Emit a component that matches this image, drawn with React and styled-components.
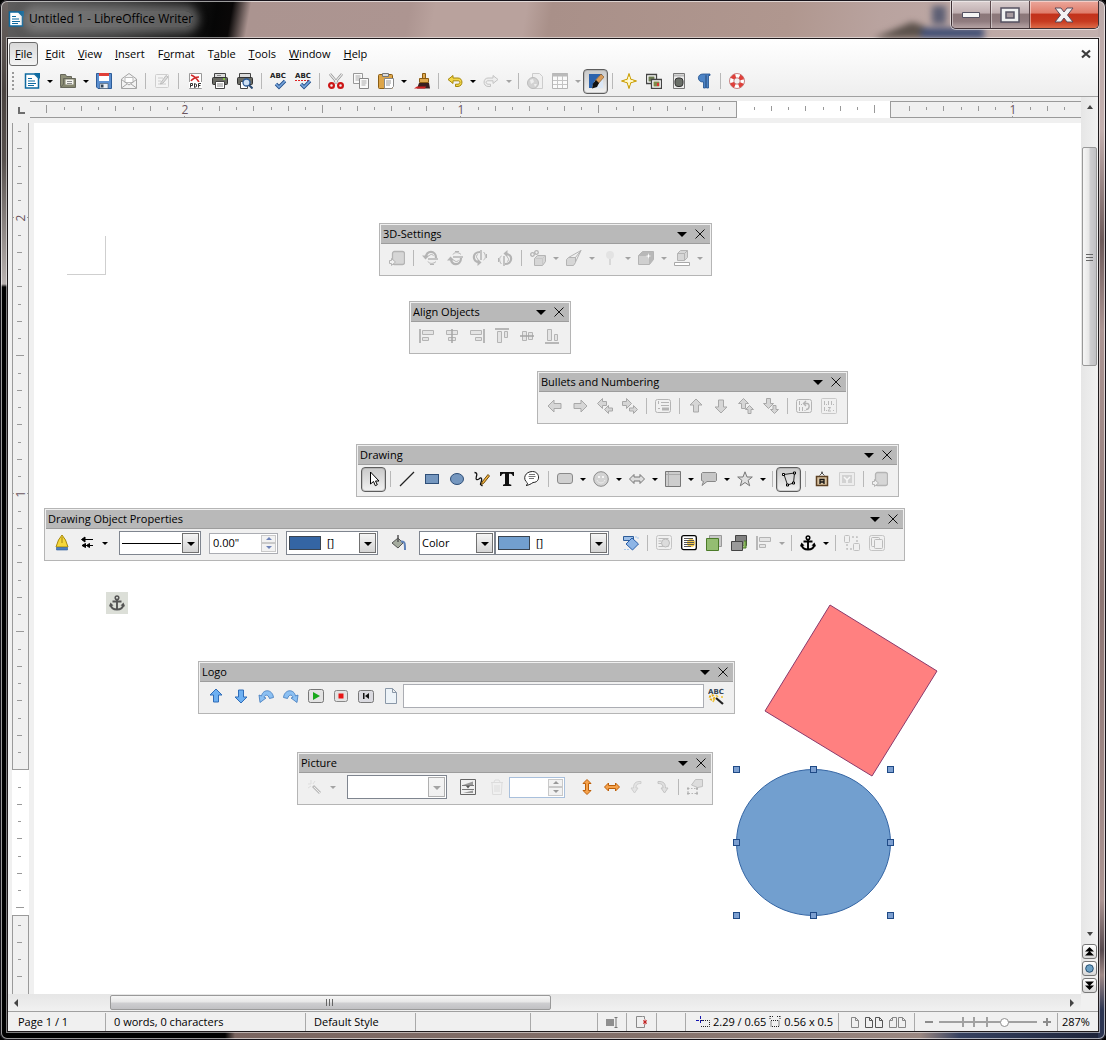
import React from "react";
import styled, { createGlobalStyle, css } from "styled-components";

const Global = createGlobalStyle`
  *, *::before, *::after { box-sizing: border-box; }
  body { margin: 0; background: #000; }
  body, button, input, select { font: 11px/16px "Open Sans", "Noto Sans", sans-serif; color: #000; }
  button { border: 0; background: none; padding: 0; }
`;

/* ---------- window frame ---------- */

const Frame = styled.div`
  display: flex;
  flex-direction: column;
  height: 100vh;
  min-height: 960px;
  padding: 0 7px 8px;
  border-radius: 7px;
  box-shadow: inset 0 0 0 1px #16131a, inset 0 0 0 2px rgba(255, 255, 255, 0.6);
  background:
    linear-gradient(to bottom, #6b6462 0, #4a4340 90px, #57504d 160px, #b9b2b0 284px, #000 287px) left / 8px 100% no-repeat,
    linear-gradient(to bottom, #bba9a8 0, #c4b0af 130px, #6d5a5a 240px, #ad9694 330px, #8d7674 600px, #ac9593 900px, #55484d 950px, #a08a88 975px, #2c3552 1010px) right / 8px 100% no-repeat,
    linear-gradient(to right, #000 0, #000 225px, #7a6560 235px, #83706a 640px, #9a8781 920px, #35405f 960px, #1c2238 100%) bottom / 100% 8px no-repeat,
    linear-gradient(100deg, #605f5f 0, #3a3a3a 120px, #060606 215px, #0a0808 230px, #ab9490 248px, #ad9591 405px, #b9a29d 430px, #b9a29d 520px, #a99089 545px, #b0978f 780px, #b9a39f 870px, #c3b0ae 100%) top / 100% 60px no-repeat,
    #000;
`;

const TitleBar = styled.header`
  position: relative;
  display: flex;
  align-items: center;
  flex: 0 0 38px;
  padding-left: 1px;
  gap: 5px;
  overflow: hidden;
`;

const Title = styled.h1`
  margin: 0;
  font-size: 12px;
  font-weight: 400;
  line-height: 16px;
  border-radius: 9px;
  background: rgba(150, 150, 150, 0.55);
  box-shadow: 0 0 9px 6px rgba(150, 150, 150, 0.55);
`;

const Scenery = styled.svg`
  position: absolute;
  right: 75px;
  bottom: 0;
  filter: blur(3px);
`;

const Captions = styled.div`
  position: relative;
  display: flex;
  align-self: flex-start;
  margin: 1px 0 0 auto;
  border: 1px solid #3d2f34;
  border-top: 0;
  border-radius: 0 0 5px 5px;
  box-shadow: 0 0 0 1px rgba(255, 255, 255, 0.55);
  overflow: hidden;
`;

const Caption = styled.button`
  display: grid;
  place-items: center;
  width: ${(p) => (p.$close ? 68 : 39)}px;
  height: 27px;
  border-right: 1px solid #5a484b;
  background: ${(p) =>
    p.$close
      ? "linear-gradient(#eba79b 0, #df7c6a 45%, #c2311a 48%, #c63a20 75%, #dd6a48)"
      : "linear-gradient(#dcd0d0 0, #bfaeb0 45%, #8b7779 48%, #8f7b7e 75%, #b5a3a4)"};
  box-shadow: inset 1px 1px 0 rgba(255, 255, 255, 0.45);
  &:last-child { border-right: 0; }
`;

const Client = styled.main`
  display: flex;
  flex-direction: column;
  flex: 1;
  min-height: 0;
  border: 1px solid #1f1a1c;
  box-shadow: 0 0 0 1px rgba(255, 255, 255, 0.5);
  background: #f0f0f0;
`;

/* ---------- menus and main toolbar ---------- */

const TopArea = styled.div`
  flex: 0 0 58px;
  border-bottom: 1px solid #a0a0a0;
  background: linear-gradient(#fff, #eee);
`;

const MenuBar = styled.nav`
  display: flex;
  align-items: center;
  height: 29px;
  padding: 0 7px 0 1px;
`;

const MenuItem = styled.button`
  height: 24px;
  padding: 0 5px;
  margin-right: 1px;
  border: 1px solid ${(p) => (p.$active ? "#6c6c6c" : "transparent")};
  border-radius: 3px;
  background: ${(p) => (p.$active ? "linear-gradient(#d9d9d9, #f4f4f4)" : "none")};
  u { text-underline-offset: 1px; }
`;

const CloseDoc = styled.button`
  display: flex;
  margin-left: auto;
`;

const Bar = styled.div`
  display: flex;
  align-items: center;
  height: 26px;
`;

const Grip = styled.span`
  width: 2px;
  height: 18px;
  margin: 0 5px 0 4px;
  background: repeating-linear-gradient(#999 0 2px, transparent 2px 4px);
`;

const Tool = styled.button`
  display: grid;
  place-items: center;
  flex: none;
  width: 25px;
  height: 25px;
  border-radius: 4px;
  ${(p) =>
    p.$on &&
    css`
      border: 1px solid #5d5d5d;
      background: linear-gradient(#c9c9c9, #f2f2f2);
      box-shadow: inset 0 0 0 1px rgba(140, 140, 140, 0.35);
    `}
`;

const Arrow = styled.button`
  flex: none;
  display: grid;
  place-items: center;
  width: 11px;
  height: 25px;
  &::before {
    content: "";
    border: 3px solid transparent;
    border-top-color: ${(p) => (p.$dim ? "#a3a3a3" : "#000")};
    border-bottom: 0;
  }
`;

const Sep = styled.span`
  flex: none;
  width: 8px;
  height: 16px;
  background: linear-gradient(#b8b8b8, #b8b8b8) center / 1px 100% no-repeat;
`;

const Gap = styled.span`
  flex: none;
  width: ${(p) => p.$w || 8}px;
  height: ${(p) => p.$h || 1}px;
`;

/* ---------- rulers, page and scroll bars ---------- */

const Work = styled.div`
  display: grid;
  grid-template-columns: minmax(0, 1fr) 17px;
  grid-template-rows: minmax(0, 1fr) 17px;
  flex: 1;
  min-height: 0;
`;

const Editor = styled.section`
  display: grid;
  grid-template-columns: 26px minmax(0, 1fr);
  grid-template-rows: 26px minmax(0, 1fr);
  min-height: 0;
`;

const Corner = styled.div`
  display: grid;
  place-items: center end;
  padding-right: 9px;
`;

const HRuler = styled.div`
  display: flex;
  margin-left: -4px;
  padding: 4px 0;
  overflow: hidden;
  svg { display: block; width: 100%; height: 17px; }
`;

const VRuler = styled.div`
  overflow: hidden;
  padding-left: 4px;
  svg { display: block; width: 17px; height: 100%; }
`;

const Page = styled.div`
  position: relative;
  overflow: hidden;
  background: #fff;
`;

const Shapes = styled.svg`
  position: absolute;
  inset: 0;
  width: 100%;
  height: 100%;
`;

const AnchorTag = styled.span`
  position: absolute;
  left: 72px;
  top: 469px;
  display: grid;
  place-items: center;
  width: 22px;
  height: 22px;
  color: #555;
  background: #dcdfd8;
`;

const VScroll = styled.div`
  display: flex;
  flex-direction: column;
  align-items: center;
  padding: 6px 0 1px;
  background: linear-gradient(to right, #e6e6e6, #f1f1f1);
`;

const HScroll = styled.div`
  display: flex;
  align-items: center;
  padding: 0 5px 0 4px;
  background: linear-gradient(#e6e6e6, #f1f1f1);
`;

const Track = styled.div`
  display: flex;
  flex: 1;
  min-width: 0;
  min-height: 0;
  ${(p) =>
    p.$vertical
      ? css`width: 15px; flex-direction: column; padding-top: 36px;`
      : css`height: 15px; padding-left: 90px;`}
`;

const Thumb = styled.button`
  display: grid;
  place-items: center;
  border: 1px solid #999;
  border-radius: 2px;
  ${(p) =>
    p.$vertical
      ? css`width: 15px; height: 28%; background: linear-gradient(to right, #f6f6f6 0, #e6e6e6 48%, #cfcfd1 52%, #c0c0c3);`
      : css`height: 15px; width: 46%; background: linear-gradient(#f6f6f6 0, #e6e6e6 48%, #cfcfd1 52%, #c0c0c3);`}
`;

const ScrollArrow = styled.button`
  display: grid;
  place-items: center;
  flex: none;
  width: 8px;
  height: 8px;
`;

const NavButton = styled.button`
  display: grid;
  place-items: center;
  flex: none;
  width: 15px;
  height: 15px;
  margin-top: 2px;
  border: 1px solid #777;
  border-radius: 3px;
  background: linear-gradient(#fff, #d8d8d8);
`;

const ScrollCorner = styled.div`
  background: #f0f0f0;
`;

/* ---------- floating toolbars ---------- */

const PanelBox = styled.section`
  position: absolute;
  left: ${(p) => p.$x}px;
  top: ${(p) => p.$y}px;
  width: ${(p) => p.$w}px;
  padding: 1px;
  border: 1px solid #b5b5b5;
  background: #f0f0f0;
`;

const PanelHead = styled.header`
  display: flex;
  align-items: center;
  gap: 8px;
  height: 19px;
  padding: 0 5px 0 2px;
  border-bottom: 1px solid #9d9d9d;
  background: #b9b9b9;
  h2 { flex: 1; margin: 0; font-size: 11px; font-weight: 400; line-height: 18px; white-space: nowrap; }
  button { display: flex; }
`;

const PanelBody = styled.div`
  display: flex;
  align-items: center;
  height: 30px;
  padding: 0 4px 2px 3px;
`;

const Combo = styled.label`
  position: relative;
  display: flex;
  align-items: center;
  flex: none;
  width: ${(p) => p.$w}px;
  height: 24px;
  border: 1px solid #7f858f;
  background: #fff;
  select {
    appearance: none;
    flex: 1;
    min-width: 0;
    height: 22px;
    padding: 0 20px 0 2px;
    border: 0;
    background: transparent;
  }
  &::before {
    content: "";
    position: absolute;
    right: 1px;
    top: 1px;
    width: 17px;
    height: 20px;
    border: 1px solid ${(p) => (p.$dim ? "#b0b0b0" : "#707070")};
    background: linear-gradient(#f4f4f4, ${(p) => (p.$dim ? "#f0f0f0" : "#d4d4d4")});
  }
  &::after {
    content: "";
    position: absolute;
    right: 5px;
    top: 10px;
    border: 4px solid transparent;
    border-top-color: ${(p) => (p.$dim ? "#a3a3a3" : "#000")};
    border-bottom: 0;
  }
`;

const Swatch = styled.span`
  flex: none;
  width: 32px;
  height: 14px;
  margin: 0 4px 0 2px;
  border: 1px solid #3a4450;
  background: ${(p) => p.$color};
`;

const LineSample = styled.span`
  position: absolute;
  left: 2px;
  right: 19px;
  height: 1px;
  background: #000;
`;

const Spin = styled.div`
  display: flex;
  flex: none;
  width: ${(p) => p.$w}px;
  height: 21px;
  padding: 1px;
  border: 1px solid ${(p) => (p.$blue ? "#a9c0dc" : "#abadb3")};
  background: #fff;
  input { flex: 1; min-width: 0; padding: 0 2px; border: 0; background: none; }
`;

const SpinButtons = styled.div`
  display: grid;
  grid-template-rows: 1fr 1fr;
  width: 15px;
  button {
    display: grid;
    place-items: center;
    border: 1px solid #c9c9c9;
    background: #f2f2f2;
  }
`;

const CommandLine = styled.input`
  flex: 1;
  min-width: 0;
  height: 24px;
  border: 1px solid #abadb3;
  background: #fff;
`;

/* ---------- status bar ---------- */

const StatusBar = styled.footer`
  display: flex;
  align-items: flex-end;
  flex: 0 0 20px;
  border-top: 1px solid #a0a0a0;
`;

const Cell = styled.div`
  display: flex;
  align-items: center;
  flex: ${(p) => (p.$grow ? "1 1 0" : "none")};
  width: ${(p) => p.$w}px;
  height: 18px;
  padding-left: ${(p) => p.$pad || 0}px;
  justify-content: ${(p) => (p.$center ? "center" : "flex-start")};
  gap: ${(p) => p.$gap || 0}px;
  white-space: nowrap;
  border-right: ${(p) => (p.$last ? 0 : 1)}px solid #a9a9a9;
  svg { flex: none; }
`;

const ZoomStep = styled.button`
  display: flex;
`;

const Zoom = styled.input`
  appearance: none;
  width: 98px;
  height: 16px;
  margin: 0;
  background:
    linear-gradient(#a0a0a0, #a0a0a0) 0 7px / 100% 2px no-repeat,
    linear-gradient(#a0a0a0, #a0a0a0) 23px 3px / 2px 10px no-repeat,
    linear-gradient(#a0a0a0, #a0a0a0) 34px 3px / 2px 10px no-repeat,
    linear-gradient(#a0a0a0, #a0a0a0) 47px 3px / 2px 10px no-repeat;
  &::-webkit-slider-thumb {
    appearance: none;
    width: 9px;
    height: 9px;
    border: 1px solid #909090;
    border-radius: 50%;
    background: #fff;
  }
`;

/* ---------- icons ---------- */

const Svg = ({ s = 16, w, h, children, ...rest }) => (
  <svg width={w || s} height={h || s} viewBox={`0 0 ${w || s} ${h || s}`} fill="none" aria-hidden="true" {...rest}>
    {children}
  </svg>
);

const G = "#b4b4b4";
const L = "#d6d6d6";

const blockArrow = "M1 8l6-6v3.500h7v5h-7V14z";
const small = "M0 4l4-4v2.500h4v3h-4V8z";

const Tri = ({ dir, c = "#444" }) => (
  <Svg s={8}>
    <path d={{ up: "M1 6l3-4 3 4z", down: "M1 2l3 4 3-4z", left: "M6 0v8L2 4z", right: "M2 0v8l4-4z" }[dir]} fill={c} />
  </Svg>
);

const Rotate3D = ({ t }) => (
  <g transform={t} stroke={G}>
    <path d="M4 7c0-7 10-7 10 1" strokeWidth="2.200" />
    <path d="M0 5.500h7.500L3.500 9.500z" fill={G} stroke="none" />
    <path d="M6 9h10" strokeWidth="1.500" />
    <path d="M7 6c1-2 4-2 4.500 0M6 11.500c1 2.500 6 2.500 8 0M8 14.500h4" />
  </g>
);

const Arc = ({ flip, a, b }) => (
  <g transform={flip ? "matrix(-1 0 0 1 16 0)" : undefined}>
    <path d="M1 7l1 7.500L8 10l-2-.8C7 6.500 10 6 11.500 10.500l4-1C14.500 1 5 .5 3.500 8z" fill={a} stroke={b} strokeWidth=".8" />
  </g>
);

const icons = {
  writer: <><path d="M1.500 1h9l4 4v10h-13z" fill="#fff" stroke="#0e6aa0" strokeWidth="1.500" /><path d="M10 0h6v6z" fill="#0e6aa0" /><path d="M4 5.500h4M4 8h7M4 10.500h8M4 12.500h6" stroke="#0e6aa0" /></>,
  open: <><path d="M.5 13.500v-12h5l1 2h5v10z" fill="#8f9078" stroke="#66675a" /><path d="M4.500 5.500h9v6h-9z" fill="#f5f5f0" stroke="#888" /><path d="M6 7.500h5M6 9.500h5" stroke="#888" /><path d="M.5 14.500l3-3.500V5.500h12v9z" fill="#85866f" stroke="#66675a" /><path d="M5.500 6.500h8v5h-8z" fill="#f5f5f0" /><path d="M7 8.500h5M7 10.500h5" stroke="#888" /></>,
  save: <><path d="M.5.500h15v15H2l-1.500-1.500z" fill="#5b8fd0" stroke="#2d5c98" /><path d="M3 1h10v7H3z" fill="#fff" /><path d="M3 0h10v3H3z" fill="#e0403a" /><path d="M4 10.500h8v5H4z" fill="#e8eef5" stroke="#456" strokeWidth=".6" /><path d="M5 11.500h2.500v3H5z" fill="#345" /></>,
  mail: <><path d="M.5 6l7.500-5.500L15.500 6v9.500H.500z" fill="#f3f3f3" stroke="#a5a5a5" /><path d="M4 4.500h8v5H4z" fill="#fff" stroke="#bbb" /><path d="M.5 6.500L8 12l7.500-5.500M.5 15L6 11M15.500 15L10 11" stroke="#a5a5a5" /></>,
  edit: <><rect x="1.500" y="1.500" width="13" height="13" rx="1" fill="#f4f4f4" stroke="#cfcfcf" /><path d="M4 5h5M4 8h3M4 11h8" stroke="#ccc" /><path d="M7 9.500L12 2.500l2 1.500-5 6-2.500 1z" fill="#ddd" stroke="#bbb" /></>,
  pdf: <><path d="M2.500.500h12v15h-12z" fill="#fff" stroke="#999" /><path d="M4 2c3 1 6 4 8 7M12 4C9 4 5 6 4 8" stroke="#cf2b2b" strokeWidth="1.600" /><path d="M2 9h13v6H2z" fill="#fff" /><path d="M3.500 14.500v-4h2v2h-2M7.500 14.500v-4l2 1v2l-2 1M11.500 14.500v-4h2.500M11.500 12.500h2" stroke="#333" /></>,
  print: <><path d="M2.500.500h11v5h-11z" fill="#ddd" stroke="#444" /><rect x=".5" y="4.500" width="15" height="7" rx="1" fill="#6a6b64" stroke="#333" /><path d="M3.500 8.500h9v7h-9z" fill="#fff" stroke="#444" /><path d="M5 2.500h4M5 11h6M5 13h6" stroke="#888" /><path d="M11 6h2" stroke="#8be03b" strokeWidth="1.500" /></>,
  preview: <><path d="M2.500.500h11v5h-11z" fill="#ddd" stroke="#444" /><rect x=".5" y="4.500" width="15" height="7" rx="1" fill="#6a6b64" stroke="#333" /><path d="M3.500 8.500h7v7h-7z" fill="#fff" stroke="#444" /><circle cx="9.500" cy="9.500" r="3.500" fill="#cfe1f5" stroke="#2d5c98" strokeWidth="1.300" /><path d="M12 12l3.500 3.500" stroke="#2b4a72" strokeWidth="2" /></>,
  cut: <><path d="M2 1l7.500 9M14 1L6.500 10" stroke="#888" strokeWidth="2.600" /><path d="M2 1l7.500 9M14 1L6.500 10" stroke="#e8e8e8" strokeWidth="1.200" /><circle cx="3.500" cy="12.500" r="2.400" stroke="#cc1515" strokeWidth="2.200" /><circle cx="12.500" cy="12.500" r="2.400" stroke="#cc1515" strokeWidth="2.200" /></>,
  copy: <><path d="M.5.500h9v10h-9z" fill="#fafafa" stroke="#999" /><path d="M2.500 3h5M2.500 5h5M2.500 7h4" stroke="#aaa" /><path d="M6.500 5.500h9v10h-9z" fill="#fafafa" stroke="#888" /><path d="M8.500 8h5M8.500 10h5M8.500 12h4" stroke="#aaa" /></>,
  paste: <><rect x=".5" y="1.500" width="14" height="14" rx="1" fill="#dda548" stroke="#8a5d14" /><path d="M4.500.500h6v3h-6z" fill="#ddd" stroke="#777" /><path d="M6.500 5.500h9v8l-2 2h-7z" fill="#fff" stroke="#888" /><path d="M8 8h5M8 10h5M8 12h4" stroke="#999" /></>,
  brush: <><path d="M8.500.500h3v5h-3zM5.500 5.500h9v4h-9z" fill="#e0a94f" stroke="#8a5d14" /><path d="M5 10h10l1 5.500H3z" fill="#3a2020" /><path d="M0 15.500l3-2h9l-1 2z" fill="#d02020" /></>,
  undo: <><path d="M1 6.500l5-4v2.500h5c5 0 5.500 8 0 8.500H8.500v-2.300H11c2.500-.4 2.500-3.400 0-3.400H6v2.700z" fill="#f2d648" stroke="#a5860a" /></>,
  redo: <><g transform="matrix(-1 0 0 1 16 0)"><path d="M1 6.500l5-4v2.500h5c5 0 5.500 8 0 8.500H8.500v-2.300H11c2.500-.4 2.500-3.400 0-3.400H6v2.700z" fill="#ededed" stroke="#c4c4c4" /></g></>,
  web: <><path d="M5.500.500h7l3 3v12h-10z" fill="#f0f0f0" stroke="#ccc" /><circle cx="6" cy="10" r="5.500" fill="#d2d2d2" stroke="#bbb" /><path d="M3 7l3-1 1 3-3 2zM7 11l3 0-2 3z" fill="#eee" /></>,
  table: <><path d="M.5.500h15v15H.500z" fill="#fbfbfb" stroke="#b5b5b5" /><path d="M0 2h16" stroke="#bbb" strokeWidth="3" /><path d="M1 7.500h14M1 11.500h14M5.500 3v12M10.500 3v12" stroke="#c4c4c4" /></>,
  draw: <><path d="M1 1h14v14H1z" fill="#2c63ad" /><path d="M15 1v14H4C5 9 9 4 15 1z" fill="#dbe7f6" /><path d="M13 1l3 3-6 7-3-3z" fill="#d89c5a" stroke="#7a4e1c" strokeWidth=".6" /><path d="M8 7l3 3-2 4-5 1.500 1-5z" fill="#111" /></>,
  navigator: <><path d="M8 .5L9.800 6.200 15.500 8 9.800 9.800 8 15.500 6.200 9.800.500 8l5.700-1.800z" fill="#ffef8a" stroke="#c79a00" /><path d="M8 4v8M4 8h8" stroke="#fff" /></>,
  gallery: <><path d="M.5 1.500h10v9H.500z" fill="#fff" stroke="#444" strokeWidth="1.300" /><path d="M2.500 3.500h6v5h-6z" fill="#6a7a50" /><path d="M5.500 6.500h10v9h-10z" fill="#fff" stroke="#444" strokeWidth="1.300" /><path d="M7.500 8.500h6v5h-6z" fill="#7f8a4a" /><path d="M11 10h2v3h-2z" fill="#d33" /></>,
  data: <><path d="M2.500.500h11v15h-11z" fill="#eee" stroke="#777" /><path d="M3 2.500h10" stroke="#bbb" strokeWidth="2" /><rect x="4" y="5" width="8" height="8.500" rx="3" fill="#6a6f68" stroke="#333" /></>,
  pilcrow: <path d="M14 1v1.500h-1.500V15h-2V2.500H9.500V15h-2V9C1 9.500.500 1 7 1z" fill="#4d84c6" stroke="#1e4f8d" strokeWidth=".8" />,
  help: <><circle cx="8" cy="8" r="5.300" stroke="#fff" strokeWidth="4" /><circle cx="8" cy="8" r="5.300" stroke="#e0403a" strokeWidth="4" strokeDasharray="4.200 4.120" strokeDashoffset="-2" /><circle cx="8" cy="8" r="7.500" stroke="#a33" strokeWidth=".6" /><circle cx="8" cy="8" r="3.200" stroke="#a33" strokeWidth=".6" /></>,

  extrude: <><rect x="3.500" y="1.500" width="12" height="13" rx="2" fill={L} stroke={G} strokeWidth="1.300" /><path d="M.5 13.500v-3h2v-2l4 3.500-4 3.500v-2z" fill="#f0f0f0" stroke={G} /></>,
  tilt1: <Rotate3D />,
  tilt2: <Rotate3D t="matrix(1 0 0 -1 0 16)" />,
  tilt3: <Rotate3D t="matrix(0 -1 1 0 0 16)" />,
  tilt4: <Rotate3D t="matrix(0 1 -1 0 16 0)" />,
  depth: <><path d="M4.500 8.500l3-3h8v6l-3 4h-8z" fill={L} stroke={G} /><path d="M12.500 15V8.500h-7M12.500 8.500l3-3" stroke="#c8c8c8" /><circle cx="2.500" cy="4.500" r="1.800" stroke={G} strokeWidth="1.300" /><circle cx="6.500" cy="2.500" r="1.800" stroke={G} strokeWidth="1.300" /></>,
  direction: <><path d="M.5 9.500l2-2h7v5l-2 3h-7z" fill={L} stroke={G} /><path d="M2.500 7.500L15 .5 9.500 12M9 8l6-7.500" stroke={G} /></>,
  light: <><circle cx="8" cy="5" r="4" fill="#e3e3e3" /><path d="M8 9v6" stroke="#d8d8d8" strokeWidth="2" /></>,
  surface: <><path d="M.5 5.500l4-4h11v8l-4 5h-11z" fill="#b8b8b8" stroke={G} /><path d="M1 6h10v8H1z" fill="#cfcfcf" /><path d="M10.500 3l.6 2.400 2.400.6-2.400.6-.6 2.400-.6-2.400L7.500 6l2.400-.6z" fill="#fff" /></>,
  color3d: <><path d="M3.500 3.500l3-3h7v7l-3 3h-7z" fill={L} stroke={G} /><path d="M10.500 10.500v-7h-7M10.500 3.500l3-3" stroke={G} /><path d="M.5 12.500h15v3H.500z" fill="#fff" stroke="#a8a8a8" /></>,

  alignL: <><path d="M1 1v14" stroke="#a4a4a4" strokeWidth="1.500" /><path d="M3.500 2.500h11v4h-11zM3.500 9.500h6v3h-6z" fill="#e4e4e4" stroke={G} /></>,
  alignC: <><path d="M2.500 2.500h11v4h-11zM4.500 9.500h7v3h-7z" fill="#e4e4e4" stroke={G} /><path d="M8 1v14" stroke="#a4a4a4" strokeWidth="1.500" /></>,
  alignR: <><path d="M15 1v14" stroke="#a4a4a4" strokeWidth="1.500" /><path d="M1.500 2.500h11v4h-11zM6.500 9.500h6v3h-6z" fill="#e4e4e4" stroke={G} /></>,
  alignT: <><path d="M1 1h14" stroke="#a4a4a4" strokeWidth="1.500" /><path d="M3.500 3.500h4v11h-4zM10.500 3.500h3v6h-3z" fill="#e4e4e4" stroke={G} /></>,
  alignM: <><path d="M3.500 3.500h4v9h-4zM9.500 4.500h4v7h-4z" fill="#e4e4e4" stroke={G} /><path d="M1 8h14" stroke="#a4a4a4" strokeWidth="1.500" /></>,
  alignB: <><path d="M1 15h14" stroke="#a4a4a4" strokeWidth="1.500" /><path d="M3.500 1.500h4v11h-4zM10.500 6.500h3v6h-3z" fill="#e4e4e4" stroke={G} /></>,

  left: <path d={blockArrow} fill={L} stroke="#a8a8a8" />,
  right: <g transform="matrix(-1 0 0 1 16 0)"><path d={blockArrow} fill={L} stroke="#a8a8a8" /></g>,
  left2: <g fill={L} stroke="#a8a8a8"><path d="M.5 5.500l5-5v3h4v4h-4v3z" /><path transform="translate(7.500 7.500)" d={small} /></g>,
  right2: <g fill={L} stroke="#a8a8a8"><path d="M9.500 5.500l-5-5v3h-4v4h4v3z" /><path transform="matrix(-1 0 0 1 15.500 7.500)" d={small} /></g>,
  up: <g transform="matrix(0 1 1 0 0 0)"><path d={blockArrow} fill={L} stroke="#a8a8a8" /></g>,
  down: <g transform="matrix(0 -1 1 0 0 16)"><path d={blockArrow} fill={L} stroke="#a8a8a8" /></g>,
  up2: <g fill={L} stroke="#a8a8a8"><path d="M5.500.500l5 5h-3v5h-4v-5h-3z" /><path transform="matrix(0 1 1 0 7.500 7.500)" d={small} /></g>,
  down2: <g fill={L} stroke="#a8a8a8"><path d="M5.500 10.500l5-5h-3v-5h-4v5h-3z" /><path transform="matrix(0 -1 1 0 7.500 15.500)" d={small} /></g>,
  unnumbered: <><rect x=".5" y="1.500" width="15" height="13" rx="2" stroke={G} /><path d="M3.500 3v3M6 4.500h8M6 7.500h8" stroke={G} /><path d="M7 11h7" stroke={G} strokeWidth="3" /><path d="M3 10.500h2" stroke={G} /></>,
  restart: <><rect x=".5" y="1.500" width="15" height="13" rx="2" stroke={G} /><path d="M3.500 3v4M3.500 9v4M6.500 9v4M5 6.500h1M8.500 12.500h1" stroke={G} /><path d="M8 5.500h3c3 0 3 6-1 6M10 3L7.500 5.500 10 8" stroke={G} strokeWidth="1.400" /></>,
  bullets: <><rect x=".5" y=".5" width="15" height="15" rx="1" stroke="#c9c9c9" /><path d="M3.500 3v4M7.500 3v4M10.500 3v4M5 6.500h1M12 6.500h1M3.500 9v4M7 9.500h2.500l-2.500 3.500h3M5 12.500h1M12 12.500h1" stroke="#b9b9b9" /></>,

  select: <path d="M4.500 1v12l3-2.500 1.800 4.200 2-1L9.500 10H13z" fill="#fff" stroke="#000" />,
  line: <path d="M1 15L15 1" stroke="#222" strokeWidth="1.200" />,
  rect: <rect x="1.500" y="3.500" width="13" height="9" fill="#7597bf" stroke="#2f4f78" />,
  ellipse: <ellipse cx="8" cy="8" rx="6.500" ry="5.500" fill="#7597bf" stroke="#2f4f78" />,
  curve: <><path d="M.5 1.500c5 0 0 6 2 7s4-3 5-1-1 4-1 6l2 1.500" stroke="#111" strokeWidth="1.300" /><path d="M14 3.500l1.500 1.500-6 7.500-2 1 .5-2.500z" fill="#f3b33d" stroke="#6b4a10" /></>,
  text: <path d="M1 1h14v4h-1.200c-.3-1.800-1-2.300-3.800-2.300V13l2.300.8V15H4v-1.200L6 13V2.700C3.200 2.700 2.500 3.200 2.200 5H1z" fill="#111" />,
  callout: <><path d="M2 14.500c1.500-1 1.500-1.500 1.500-2.500C-2 8 1 .5 8.500.500S17 11.500 9 11.500c-2 1.500-4 2.500-7 3z" fill="#fff" stroke="#222" /><path d="M5 3.500h6M4.500 5.500h7M5 7.500h5" stroke="#777" /></>,
  basic: <rect x=".5" y="2.500" width="15" height="10" rx="2.500" fill="#d0d0d0" stroke="#8a8a8a" />,
  smiley: <><circle cx="8" cy="8" r="7.300" fill="#d3d3d3" stroke="#8a8a8a" /><path d="M6 5v2M10 5v2" stroke="#fff" strokeWidth="1.500" /><path d="M4 9c1.500 4 6.500 4 8 0" stroke="#eee" /></>,
  doubleArrow: <path d="M.5 8L5 3.500V6h6V3.500L15.500 8 11 12.500V10H5v2.500z" fill="#ddd" stroke="#777" />,
  flowchart: <><path d="M.5.500h15v15H.500z" fill="#cdcdcd" stroke="#777" /><path d="M1 3.500h14M3.500 1v14" stroke="#aaa" /></>,
  bubble: <path d="M1.500 1.500h13l1 1v7l-1 1H6l-5 4 1.500-4-2-1v-7z" fill="#c6c6c6" stroke="#888" />,
  star: <path d="M8 .8l2 5.200h5.300l-4.200 3.300 1.600 5.500L8 11.500l-4.700 3.300 1.600-5.500L.7 6H6z" fill="#e0e0e0" stroke="#777" />,
  points: <><path d="M3 3.500L13.500 2l-1 10-6 2z" stroke="#222" /><path d="M1.500 2.500h2v2h-2zM12.500 1h2v2h-2zM11.500 11h2v2h-2zM5.500 13h2v2h-2z" fill="#fff" stroke="#000" /></>,
  fontwork: <><path d="M5.500 4.500L8 2l2.500 2.500" stroke="#555" /><circle cx="8" cy="1.500" r="1" fill="#555" /><path d="M2.500 5.500h11v9h-11z" fill="#d9c3a2" stroke="#5c4023" strokeWidth="1.500" /><path d="M6 13V8.500h4V13M6 11h4" stroke="#111" strokeWidth="1.300" /></>,
  picture: <><path d="M.5 1.500h15v13H.500z" fill="#ededed" stroke="#cfcfcf" /><path d="M3 4h10v8H3z" fill="#d2d2d2" /><path d="M5 6l3 3 3-3M8 9v3" stroke="#f8f8f8" strokeWidth="1.500" /></>,

  pen: <><path d="M8 0l3.500 5 2.500 7H2l2.500-7z" fill="#f5d73c" stroke="#a5860a" /><path d="M8 2v6" stroke="#a5860a" /><path d="M2.500 12.500h11v2.500h-11z" fill="#4d7fc0" stroke="#2d5c98" strokeWidth=".6" /></>,
  arrows: <path d="M3 4.500h11M3 10.500h11M6 2L2.500 4.500 6 7zM6.500 8.500L3 10.500 6.500 12.500zM10.500 8.500l-3 2 3 2z" stroke="#000" fill="#000" />,
  bucket: <><path d="M1 8l6-5 5 5-5 5z" fill="#a5ac9f" stroke="#555" /><path d="M7 0v7" stroke="#555" strokeWidth="1.500" /><path d="M10 6.500c4-.5 4 2 4 8.500" stroke="#5f82b8" strokeWidth="2" /></>,
  rotate: <><path d="M.5 1.500h10v4h-10z" fill="#9dbfe8" stroke="#2d5c98" /><path d="M9 3l6.500 6-6 6L3 9z" fill="#8db5e6" stroke="#2a5ea8" /><path d="M1 14.500h5M12 2h3v3" stroke="#a9c8ec" strokeDasharray="2 1" /></>,
  wrapOff: <><rect x=".5" y=".5" width="15" height="14" rx="2" stroke="#c4c4c4" /><path d="M2.500 3.500h10M2.500 6h3M2.500 8.500h3M2.500 11.500h10" stroke="#bbb" /><circle cx="9.500" cy="8" r="4" fill="#dcdcdc" stroke="#bbb" /></>,
  wrapOn: <><rect x=".7" y=".7" width="14.600" height="14" rx="2" fill="#fff" stroke="#000" strokeWidth="1.300" /><circle cx="10" cy="8" r="4" fill="#f2c84b" /><path d="M3 3.500h9M3 5.500h10M3 7.500h10M3 9.500h10M3 11.500h7" stroke="#555" /></>,
  front: <><path d="M3.500.500h12v11h-12z" fill="#c9c9c9" stroke="#999" /><path d="M.5 3.500h12v12H.500z" fill="#94bd72" stroke="#4b7a28" /></>,
  back: <><path d="M4.500.500h11v10h-11z" fill="#808080" stroke="#444" /><path d="M13 6h2v7h-3" fill="#8cb85f" stroke="#4b7a28" /><path d="M.5 6.500h11v9H.500z" fill="#9a9a9a" stroke="#444" /></>,
  anchor: <><circle cx="8" cy="2.800" r="1.800" stroke="currentColor" strokeWidth="1.500" /><path d="M8 4.500V15M3.500 6.500h9M1.500 9.500C2 13 5 14.500 8 14.500S14 13 14.500 9.500" stroke="currentColor" strokeWidth="1.900" /><path d="M0 11.500l1.500-4 3 3zM16 11.500l-1.500-4-3 3z" fill="currentColor" /></>,
  ungroup: <><rect x="9.500" y="8.500" width="6" height="7" rx="1" stroke="#c0c0c0" /><rect x=".5" y=".5" width="5" height="7" rx="1" stroke="#c0c0c0" /><path d="M8 2h5v5M3 9v5h5" stroke="#c0c0c0" strokeWidth="1.500" strokeDasharray="2 2" /></>,
  group: <><rect x=".5" y=".5" width="15" height="15" rx="2" stroke="#c4c4c4" /><rect x="2.500" y="2.500" width="8" height="9" rx="1" stroke="#bbb" /><rect x="5.500" y="4.500" width="8" height="9" rx="1" fill="#f0f0f0" stroke="#bbb" /></>,

  logoUp: <g transform="matrix(0 1 1 0 0 0)"><path d={blockArrow} fill="#6db0f2" stroke="#2f6cb8" /></g>,
  logoDown: <g transform="matrix(0 -1 1 0 0 16)"><path d={blockArrow} fill="#6db0f2" stroke="#2f6cb8" /></g>,
  logoLeft: <Arc a="#8cc0f2" b="#3f79bd" />,
  logoRight: <Arc flip a="#8cc0f2" b="#3f79bd" />,
  play: <><rect x=".5" y="1.500" width="15" height="13" rx="2" fill="#e3e3e3" stroke="#777" /><path d="M5 4v8l7-4z" fill="#17a81a" /></>,
  stop: <><rect x="1.500" y="2.500" width="13" height="11" rx="2" fill="#e3e3e3" stroke="#888" /><path d="M5.500 5.500h5v5h-5z" fill="#e81515" /></>,
  home: <><rect x=".5" y="2.500" width="15" height="12" rx="2" fill="#dadae0" stroke="#777" /><path d="M5 5h1.500v6H5zM11 5v6L7 8z" fill="#111" /></>,
  page: <path d="M2.500.500h7l4 4v11h-11zM9.500.500v4h4" fill="#edf3f8" stroke="#8a98a8" />,
  wand: <><path d="M8 10l7 6" stroke="#222" strokeWidth="2.200" /><circle cx="4" cy="9.500" r="2.200" stroke="#e6ad18" strokeWidth="2" strokeDasharray="2 1" /><path d="M8 7l2 2M14 8v2M7 10l-2 4" stroke="#f0c53a" strokeWidth="1.600" /></>,

  filter: <><path d="M6 7l7 7" stroke="#bbb" strokeWidth="3" /><path d="M7 8l6 6" stroke="#eee" /><path d="M4 1v4M1 5h3M8 2L6 5M1 9l3-2" stroke="#ddd" /></>,
  contrast: <><path d="M.5.500h15v15H.500z" fill="#f0f0f0" stroke="#666" /><path d="M3 6l10-3.500V6z" fill="#999" /><path d="M3 14l10-2.500V14z" fill="#999" /><path d="M2 6.500h12M2 10.500h12" stroke="#777" /><path d="M6 7h4l-2 2.500z" fill="#555" /></>,
  trash: <path d="M2 3.500h12M3 4l.7 11.500h8.600L13 4M5 3l1-2h4l1 2M6 6v7M8 6v7M10 6v7" stroke="#dcdcdc" />,
  flipV: <g transform="matrix(0 1 1 0 0 0)"><path d="M.5 8l4-4v2.500h7V4l4 4-4 4V9.500h-7V12z" fill="#f5a24c" stroke="#bd5f08" /></g>,
  flipH: <path d="M.5 8l4-4v2.500h7V4l4 4-4 4V9.500h-7V12z" fill="#f5a24c" stroke="#bd5f08" />,
  turnL: <path d="M12 2.500C6 2 4.500 5 4.500 9H2l3.500 5 3.500-5H7c0-3 1-4.500 5-4.500z" fill="#e4e4e4" stroke="#cfcfcf" />,
  turnR: <path d="M4 2.500c6-.5 7.500 2.500 7.500 6.500H14l-3.500 5L7 9h2c0-3-1-4.500-5-4.500z" fill="#e0e0e0" stroke="#c4c4c4" />,
  props: <><path d="M4.500 6l4-5.500h7v7l-5 1z" fill="#ddd" stroke="#c0c0c0" /><path d="M1 9.500h9v5H1z" stroke="#b5b5b5" strokeDasharray="1.500 1.500" /><path d="M0 8.500h2v2H0zM9 8.500h2v2H9zM0 13.500h2v2H0zM9 13.500h2v2H9z" fill="#b0b0b0" /></>,
};

const AbcText = styled.text`
  font: 700 7px "DejaVu Sans", sans-serif;
`;

const Abc = ({ wavy }) => (
  <Svg s={18}>
    <AbcText x="1" y="6" fill="#222">ABC</AbcText>
    {wavy && <path d="M1 8.500h14" stroke="#d22" strokeDasharray="2 1" />}
    <path d="M7 12l3 3 6-6" stroke="#24508c" strokeWidth="3.400" />
    <path d="M7 12l3 3 6-6" stroke="#79a7de" strokeWidth="1.600" />
  </Svg>
);

const Icon = ({ n, s }) => {
  if (n === "spell") return <Abc />;
  if (n === "autospell") return <Abc wavy />;
  if (n === "command")
    return (
      <Svg s={17}>
        {icons.wand}
        <AbcText x="0" y="6" fill="#345">ABC</AbcText>
      </Svg>
    );
  return (
    <svg width={s || 16} height={s || 16} viewBox="0 0 16 16" fill="none" aria-hidden="true">
      {icons[n]}
    </svg>
  );
};

/* "|" is a separator, a "+" suffix adds a menu arrow, "-" a greyed one, "*" marks a pressed tool */
const Tools = ({ items }) =>
  items.split(" ").map((it, i) => {
    if (it === "|") return <Sep key={i} />;
    const name = it.replace(/[+\-*]/g, "");
    return (
      <React.Fragment key={i}>
        <Tool aria-label={name} $on={it.includes("*")}>
          <Icon n={name} />
        </Tool>
        {/[+-]/.test(it) && <Arrow aria-label={`${name} options`} $dim={it.includes("-")} />}
      </React.Fragment>
    );
  });

const Panel = ({ title, x, y, w, children }) => (
  <PanelBox $x={x} $y={y} $w={w} aria-label={title}>
    <PanelHead>
      <h2>{title}</h2>
      <button aria-label="Toolbar options">
        <Svg w={10} h={5}><path d="M0 0h10L5 5z" fill="#000" /></Svg>
      </button>
      <button aria-label="Close toolbar">
        <Svg s={10}><path d="M.5.500l9 9M9.500.500l-9 9" stroke="#111" /></Svg>
      </button>
    </PanelHead>
    <PanelBody>{children}</PanelBody>
  </PanelBox>
);

const SpinBox = ({ w, blue, value, label }) => (
  <Spin $w={w} $blue={blue}>
    <input aria-label={label} defaultValue={value} />
    <SpinButtons>
      <button aria-label={`Increase ${label}`}><Svg w={6} h={3}><path d="M0 3l3-3 3 3z" fill={blue ? "#999" : "#6f83b8"} /></Svg></button>
      <button aria-label={`Decrease ${label}`}><Svg w={6} h={3}><path d="M0 0l3 3 3-3z" fill={blue ? "#999" : "#6f83b8"} /></Svg></button>
    </SpinButtons>
  </Spin>
);

/* ---------- ruler drawing ---------- */

const STEP = 276 / 16;
const range = (a, b) => Array.from({ length: b - a + 1 }, (_, i) => a + i);
const tickLength = (i) => (i % 8 === 0 ? 8 : i % 2 === 0 ? 5 : 3);

const RulerText = styled.text`
  font: 12px "Open Sans", "Noto Sans", sans-serif;
  fill: #6b5560;
  text-anchor: middle;
`;

const HorizontalRuler = () => {
  const zero = 706;
  return (
    <svg aria-hidden="true" shapeRendering="crispEdges">
      <path d={`M0 .5H${zero}.5V16.500H0`} fill="none" stroke="#9a9a9a" />
      <rect x={zero + 1} width="153" height="17" fill="#fff" />
      <path d={`M3000 .5H${zero + 154}.5V16.500H3000`} fill="none" stroke="#9a9a9a" />
      {range(-40, 19).map((i) => {
        const x = Math.ceil(zero + i * STEP);
        if (i === 0 || i === 9) return null;
        if (i % 16 === 0)
          return (
            <g key={i}>
              <rect x={x} y="1" width="1" height="1" fill="#999" />
              <rect x={x} y="15" width="1" height="1" fill="#999" />
              <RulerText x={x + 1} y="13">{Math.abs(i / 16)}</RulerText>
            </g>
          );
        const l = tickLength(i);
        return <rect key={i} x={x} y={Math.floor(8 - l / 2)} width="1" height={l} fill="#999" />;
      })}
    </svg>
  );
};

const VerticalRuler = () => {
  const zero = 646;
  return (
    <svg aria-hidden="true" shapeRendering="crispEdges">
      <path d={`M.5 0V${zero}.5H16.500V0`} fill="none" stroke="#9a9a9a" />
      <rect y={zero + 1} width="17" height="146" fill="#fff" />
      <path d={`M.5 3000V${zero + 146}.5H16.500V3000`} fill="none" stroke="#9a9a9a" />
      {range(-37, 12).map((i) => {
        const y = Math.ceil(zero + i * STEP);
        if (i === 0) return null;
        if (i % 16 === 0)
          return (
            <g key={i}>
              <rect x="1" y={y} width="1" height="1" fill="#999" />
              <rect x="15" y={y} width="1" height="1" fill="#999" />
              <RulerText transform={`translate(13 ${y + 1}) rotate(-90)`}>{Math.abs(i / 16)}</RulerText>
            </g>
          );
        const l = tickLength(i);
        return <rect key={i} y={y} x={Math.floor(8 - l / 2)} height="1" width={l} fill="#999" />;
      })}
    </svg>
  );
};

const Handle = ({ x, y }) => (
  <rect x={x - 2.5} y={y - 2.5} width="6" height="6" fill="#7c9fd0" stroke="#1f4a86" />
);

const menus = [["", "F", "ile"], ["", "E", "dit"], ["", "V", "iew"], ["", "I", "nsert"], ["F", "o", "rmat"], ["T", "a", "ble"], ["", "T", "ools"], ["", "W", "indow"], ["", "H", "elp"]];

export default function App() {
  return (
    <>
      <Global />
      <Frame>
        <TitleBar>
          <Scenery width="170" height="38" aria-hidden="true">
            <path d="M20 38l38-16 12 4 8 12z" fill="#5c524c" />
            <path d="M68 28h62v10H66z" fill="#3f4d74" />
            <path d="M78 6h14v18h-14z" fill="#5d5f74" />
          </Scenery>
          <Icon n="writer" />
          <Title>Untitled 1 - LibreOffice Writer</Title>
          <Captions>
            <Caption aria-label="Minimize">
              <Svg w={18} h={6}><path d="M.5.500h17v5H.500z" fill="#f5f5f5" stroke="#555262" /></Svg>
            </Caption>
            <Caption aria-label="Maximize">
              <Svg w={20} h={16}><path d="M1 1h18v14H1z" fill="#f0f0f0" stroke="#555262" strokeWidth="1.500" /><path d="M6 5h8v6H6z" fill="#a79a9f" stroke="#555262" strokeWidth="1.500" /></Svg>
            </Caption>
            <Caption $close aria-label="Close">
              <Svg w={20} h={16}><path d="M1 1h6l3 4 3-4h6l-5.500 7 5.500 7h-6l-3-4-3 4H1l5.500-7z" fill="#f2f2f2" stroke="#5a4a5a" /></Svg>
            </Caption>
          </Captions>
        </TitleBar>

        <Client>
          <TopArea>
            <MenuBar aria-label="Menu">
              {menus.map(([a, b, c], i) => (
                <MenuItem key={i} $active={i === 0}>{a}<u>{b}</u>{c}</MenuItem>
              ))}
              <CloseDoc aria-label="Close document">
                <Svg s={10}><path d="M1 1.500l8 7M9 1.500l-8 7" stroke="#3c3c3c" strokeWidth="2.200" /></Svg>
              </CloseDoc>
            </MenuBar>
            <Bar>
              <Grip />
              <Tools items="writer+ open+ save mail | edit | pdf print preview | spell autospell | cut copy paste+ brush | undo+ redo- | web table- draw* | navigator gallery data pilcrow | help" />
            </Bar>
          </TopArea>

          <Work>
            <Editor>
              <Corner><Svg s={8}><path d="M2 1v6h6" stroke="#6e6e6e" strokeWidth="2" /></Svg></Corner>
              <HRuler><HorizontalRuler /></HRuler>
              <VRuler><VerticalRuler /></VRuler>
              <Page>
                <Shapes aria-label="Document drawing">
                  <path d="M33 151.500h39M71.500 113v39" stroke="#cfcfcf" />
                  <path d="M796 482l107 66-65 105-107-65z" fill="#ff8080" stroke="#8b3a6c" />
                  <ellipse cx="779.500" cy="719.500" rx="77" ry="73" fill="#729fcf" stroke="#3465a4" />
                  {[646, 719, 792].map((y) => [702, 779, 856].map((x) => (
                    (x !== 779 || y !== 719) && <Handle key={`${x}-${y}`} x={x} y={y} />
                  )))}
                </Shapes>
                <AnchorTag><Icon n="anchor" /></AnchorTag>

                <Panel title="3D-Settings" x={345} y={100} w={333}>
                  <Tools items="extrude | tilt1 tilt2 tilt3 tilt4 | depth- direction- light- surface- color3d-" />
                </Panel>
                <Panel title="Align Objects" x={375} y={178} w={162}>
                  <Tools items="alignL alignC alignR alignT alignM alignB" />
                </Panel>
                <Panel title="Bullets and Numbering" x={503} y={248} w={311}>
                  <Tools items="left right left2 right2 | unnumbered | up down up2 down2 | restart bullets" />
                </Panel>
                <Panel title="Drawing" x={322} y={321} w={543}>
                  <Tools items="select* | line rect ellipse curve text callout | basic+ smiley+ doubleArrow+ flowchart+ bubble+ star+ | points* | fontwork picture | extrude" />
                </Panel>
                <Panel title="Drawing Object Properties" x={10} y={385} w={861}>
                  <Tools items="pen arrows+" />
                  <Gap $w={9} />
                  <Combo $w={82}>
                    <LineSample />
                    <select aria-label="Line style"><option></option></select>
                  </Combo>
                  <Gap />
                  <SpinBox w={69} value={'0.00"'} label="line width" />
                  <Gap />
                  <Combo $w={92}>
                    <Swatch $color="#3465a4" />
                    <select aria-label="Line color"><option>[]</option></select>
                  </Combo>
                  <Gap />
                  <Tools items="bucket" />
                  <Gap />
                  <Combo $w={76}>
                    <select aria-label="Fill type"><option>Color</option></select>
                  </Combo>
                  <Combo $w={114}>
                    <Swatch $color="#729fcf" />
                    <select aria-label="Fill color"><option>[]</option></select>
                  </Combo>
                  <Gap $w={9} />
                  <Tools items="rotate | wrapOff wrapOn front back alignL- | anchor+ | ungroup group" />
                </Panel>
                <Panel title="Logo" x={164} y={538} w={537}>
                  <Tools items="logoUp logoDown logoLeft logoRight play stop home page" />
                  <CommandLine aria-label="Logo command" />
                  <Tools items="command" />
                </Panel>
                <Panel title="Picture" x={263} y={629} w={416}>
                  <Tools items="filter-" />
                  <Gap $w={9} />
                  <Combo $w={100} $dim>
                    <select aria-label="Graphics mode"><option></option></select>
                  </Combo>
                  <Gap />
                  <Tools items="contrast" />
                  <Gap $w={4} />
                  <Tools items="trash" />
                  <SpinBox w={56} blue value="" label="transparency" />
                  <Gap $w={9} />
                  <Tools items="flipV flipH turnL turnR | props" />
                </Panel>
              </Page>
            </Editor>

            <VScroll>
              <ScrollArrow aria-label="Scroll up"><Tri dir="up" /></ScrollArrow>
              <Track $vertical>
                <Thumb $vertical aria-label="Vertical scroll position">
                  <Svg s={8}><path d="M0 1.500h7M0 4.500h7M0 7.500h7" stroke="#666" /></Svg>
                </Thumb>
              </Track>
              <ScrollArrow aria-label="Scroll down"><Tri dir="down" /></ScrollArrow>
              <Gap $h={4} />
              <NavButton aria-label="Previous page"><Svg s={9}><path d="M0 4.500L4.500 0 9 4.500zM0 8.500L4.500 4 9 8.500z" fill="#000" /></Svg></NavButton>
              <NavButton aria-label="Navigation"><Svg s={9}><circle cx="4.500" cy="4.500" r="3.800" fill="#6ca0c4" stroke="#234d70" /></Svg></NavButton>
              <NavButton aria-label="Next page"><Svg s={9}><path d="M0 .5L4.500 5 9 .5zM0 4.500L4.500 9 9 4.500z" fill="#000" /></Svg></NavButton>
            </VScroll>
            <HScroll>
              <ScrollArrow aria-label="Scroll left"><Tri dir="left" /></ScrollArrow>
              <Track>
                <Thumb aria-label="Horizontal scroll position">
                  <Svg s={8}><path d="M.5 0v7M3.500 0v7M6.500 0v7" stroke="#666" /></Svg>
                </Thumb>
              </Track>
              <ScrollArrow aria-label="Scroll right"><Tri dir="right" /></ScrollArrow>
            </HScroll>
            <ScrollCorner />
          </Work>

          <StatusBar>
            <Cell $w={98} $pad={10}>Page 1 / 1</Cell>
            <Cell $w={200} $pad={8}>0 words, 0 characters</Cell>
            <Cell $w={110} $pad={8}>Default Style</Cell>
            <Cell $w={115} />
            <Cell $grow />
            <Cell $w={29} $center>
              <Svg w={12} h={11}><path d="M0 2h8v7H0z" fill="#8f8f8f" /><path d="M8.500.500h3M10 1v9M8.500 10.500h3" stroke="#777" /></Svg>
            </Cell>
            <Cell $w={30} $center>
              <Svg w={12} h={12}><path d="M6.500.500h-6v11h8v-3M8.500 3V.500h-2" stroke="#8a8a8a" /><path d="M9 3.500v5M7 4.500l4 3M11 4.500l-4 3" stroke="#c01818" /></Svg>
            </Cell>
            <Cell $w={29} />
            <Cell $w={153} $pad={10} $gap={3}>
              <Svg w={14} h={12}><path d="M4.500 0v8M0 4.500h8" stroke="#1414b0" strokeDasharray="3 1" /><path d="M5 4.500h8.500v6H5" stroke="#222" strokeDasharray="1 1" /></Svg>
              <span>2.29 / 0.65</span>
              <Svg w={12} h={12}><path d="M2 4.500h8v6H2zM1 .500h3M8 .500h3M1 0v3M11 0v3" stroke="#222" strokeDasharray="1 1" /></Svg>
              <span>0.56 x 0.5</span>
            </Cell>
            <Cell $w={76} $pad={12} $gap={6}>
              <Svg w={8} h={11}><path d="M.5.500h4l3 3v7h-7zM4.500.500v3h3" stroke="#888" /></Svg>
              <Svg w={18} h={11}><path d="M.5.500h4l3 3v7h-7zM4.500.500v3h3M10.500.500h4l3 3v7h-7zM14.500.500v3h3" stroke="#555" /></Svg>
              <Svg w={17} h={11}><path d="M.5 10.500v-7l3-3h4v10zM9.500 10.500V.500h4l3 3v7zM3.500.500v3H.500M13.500.500v3h3" stroke="#888" /></Svg>
            </Cell>
            <Cell $w={143} $pad={10} $gap={6}>
              <ZoomStep aria-label="Zoom out"><Svg s={8}><path d="M0 4h8" stroke="#8c8c8c" strokeWidth="2" /></Svg></ZoomStep>
              <Zoom type="range" aria-label="Zoom" min="0" max="100" defaultValue="68" />
              <ZoomStep aria-label="Zoom in"><Svg s={8}><path d="M0 4h8M4 0v8" stroke="#8c8c8c" strokeWidth="2" /></Svg></ZoomStep>
            </Cell>
            <Cell $w={40} $pad={4} $last>287%</Cell>
          </StatusBar>
        </Client>
      </Frame>
    </>
  );
}
